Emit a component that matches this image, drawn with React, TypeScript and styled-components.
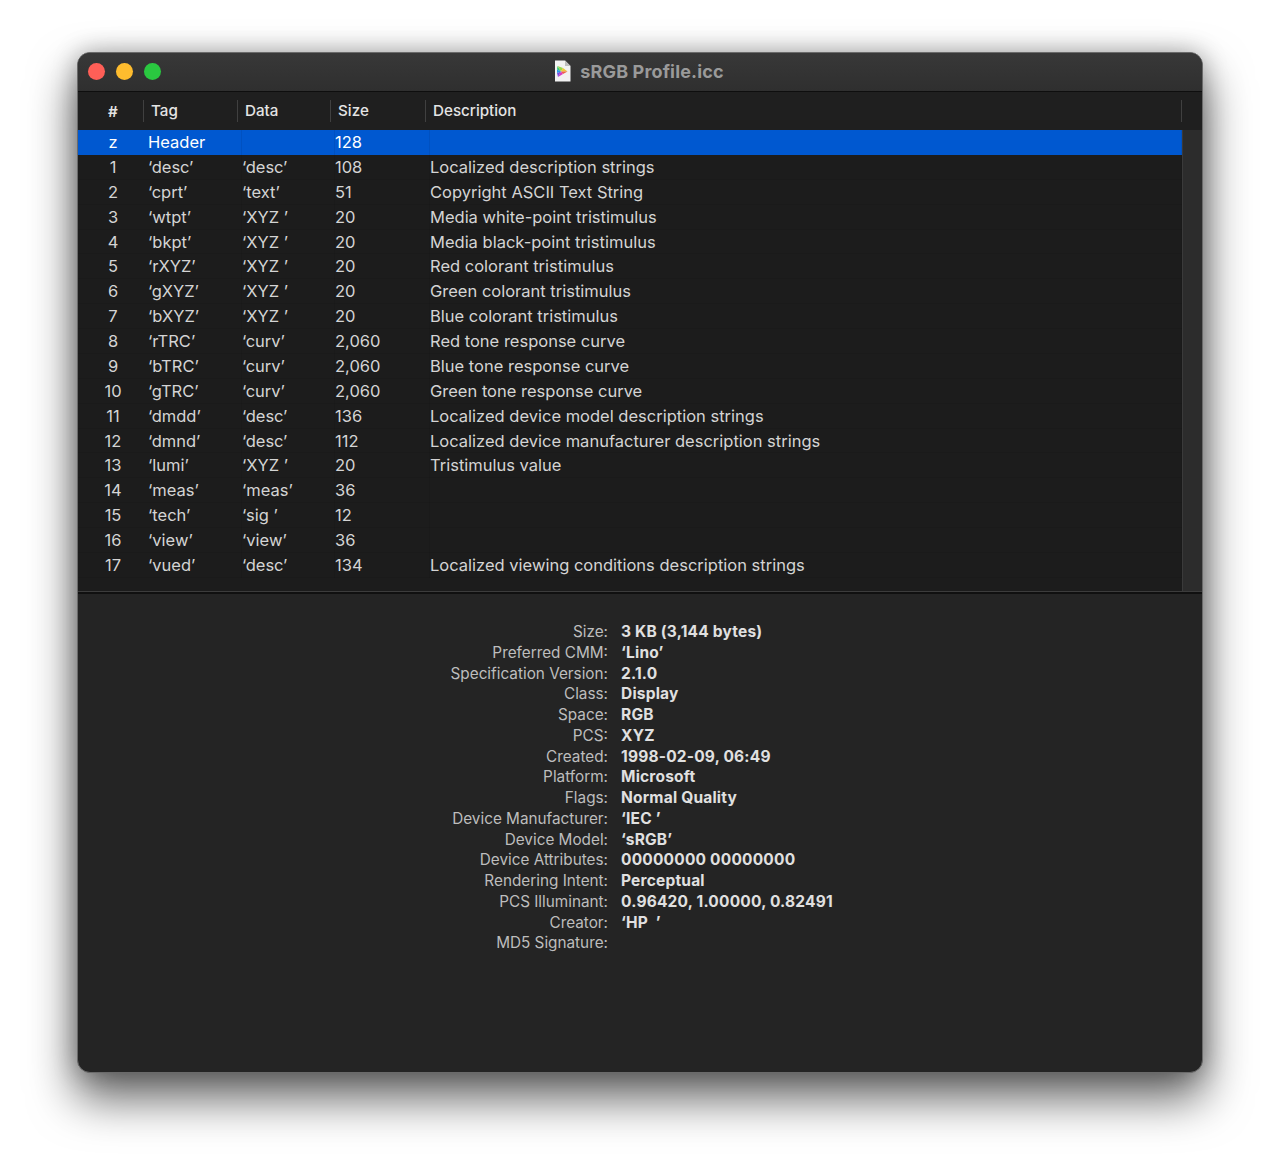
import { createGlobalStyle } from 'styled-components';
import styled from 'styled-components';

const tags = [
	['1', "‘desc’", "‘desc’", '108', 'Localized description strings'],
	['2', "‘cprt’", "‘text’", '51', 'Copyright ASCII Text String'],
	['3', "‘wtpt’", "‘XYZ ’", '20', 'Media white-point tristimulus'],
	['4', "‘bkpt’", "‘XYZ ’", '20', 'Media black-point tristimulus'],
	['5', "‘rXYZ’", "‘XYZ ’", '20', 'Red colorant tristimulus'],
	['6', "‘gXYZ’", "‘XYZ ’", '20', 'Green colorant tristimulus'],
	['7', "‘bXYZ’", "‘XYZ ’", '20', 'Blue colorant tristimulus'],
	['8', "‘rTRC’", "‘curv’", '2,060', 'Red tone response curve'],
	['9', "‘bTRC’", "‘curv’", '2,060', 'Blue tone response curve'],
	['10', "‘gTRC’", "‘curv’", '2,060', 'Green tone response curve'],
	['11', "‘dmdd’", "‘desc’", '136', 'Localized device model description strings'],
	['12', "‘dmnd’", "‘desc’", '112', 'Localized device manufacturer description strings'],
	['13', "‘lumi’", "‘XYZ ’", '20', 'Tristimulus value'],
	['14', "‘meas’", "‘meas’", '36', ''],
	['15', "‘tech’", "‘sig ’", '12', ''],
	['16', "‘view’", "‘view’", '36', ''],
	['17', "‘vued’", "‘desc’", '134', 'Localized viewing conditions description strings'],
];

const info = [
	['Size:', '3 KB (3,144 bytes)'],
	['Preferred CMM:', "‘Lino’"],
	['Specification Version:', '2.1.0'],
	['Class:', 'Display'],
	['Space:', 'RGB'],
	['PCS:', 'XYZ'],
	['Created:', '1998-02-09, 06:49'],
	['Platform:', 'Microsoft'],
	['Flags:', 'Normal Quality'],
	['Device Manufacturer:', "‘IEC ’"],
	['Device Model:', "‘sRGB’"],
	['Device Attributes:', '00000000 00000000'],
	['Rendering Intent:', 'Perceptual'],
	['PCS Illuminant:', '0.96420, 1.00000, 0.82491'],
	['Creator:', "‘HP  ’"],
	['MD5 Signature:', ''],
];

function FileIcon() {
	return (
		<svg width="17" height="22" viewBox="0 0 17 22">
			<path d="M1 0.5H11L16.5 6V21.5H1Z" fill="#f2f2f2" />
			<path d="M11 0.5V6H16.5Z" fill="#bdbdbd" />
			{/* gamut triangle, fan of colours round the white point */}
			<path d="M3.5 6L7 11.5L3 9.5Z" fill="#35c878" />
			<path d="M3.5 6L9 8L7 11.5Z" fill="#9ad648" />
			<path d="M9 8L13.5 11.5L7 11.5Z" fill="#f0c83a" />
			<path d="M13.5 11.5L7 11.5L9 14Z" fill="#f0604a" />
			<path d="M9 14L7 11.5L4 17Z" fill="#d83cc0" />
			<path d="M4 17L7 11.5L3 13Z" fill="#7a4ae0" />
			<path d="M3 13L7 11.5L3 9.5Z" fill="#2a9ae8" />
		</svg>
	);
}

function App() {
	return (
		<>
			<GlobalStyle />
			<Window>
				<TitleBar>
					<Lights>
						<Light color="#ff5f57" />
						<Light color="#febc2e" />
						<Light color="#2ac840" />
					</Lights>
					<Title>
						<FileIcon />
						sRGB Profile.icc
					</Title>
				</TitleBar>
				<TableArea>
					<TableMain>
						<HeaderRow>
							<HashHead>#</HashHead>
							<HeadCell>Tag</HeadCell>
							<HeadCell>Data</HeadCell>
							<HeadCell>Size</HeadCell>
							<LastHeadCell>Description</LastHeadCell>
						</HeaderRow>
						<Row selected>
							<NumCell>z</NumCell>
							<Cell>Header</Cell>
							<Cell />
							<Cell>128</Cell>
							<Cell />
						</Row>
						{tags.map((row) => (
							<Row key={row[0]}>
								<NumCell>{row[0]}</NumCell>
								<Cell>{row[1]}</Cell>
								<Cell>{row[2]}</Cell>
								<Cell>{row[3]}</Cell>
								<Cell>{row[4]}</Cell>
							</Row>
						))}
					</TableMain>
					<ScrollTrack>
						<HeaderStub />
					</ScrollTrack>
				</TableArea>
				<Divider />
				<InfoPanel>
					{info.map(([label, value]) => (
						<InfoRow key={label}>
							<InfoLabel>{label}</InfoLabel>
							<InfoValue>{value}</InfoValue>
						</InfoRow>
					))}
				</InfoPanel>
			</Window>
		</>
	);
}

const GlobalStyle = createGlobalStyle`
	html, body {
		margin: 0;
		background: #fff;
	}
	body {
		font-family: Inter, "Liberation Sans", sans-serif;
		-webkit-font-smoothing: antialiased;
	}
	#root {
		height: 1175px;
		overflow: hidden;
		padding: 52px 77px 0;
		box-sizing: border-box;
	}
`;

const Window = styled.div`
	width: 1126px;
	height: 1021px;
	box-sizing: border-box;
	border: 1px solid #6a6a6a;
	border-radius: 13px;
	overflow: hidden;
	background: #242424;
	box-shadow: 0 24px 46px 2px rgba(0, 0, 0, 0.6), 0 0 24px rgba(0, 0, 0, 0.28);
	display: flex;
	flex-direction: column;
`;

const TitleBar = styled.div`
	height: 38px;
	flex: none;
	position: relative;
	display: flex;
	align-items: center;
	justify-content: center;
	background: linear-gradient(#383838, #2f2f2f);
	border-bottom: 1px solid #0e0e0e;
`;

const Lights = styled.div`
	position: absolute;
	left: 10px;
	top: 10px;
	display: flex;
	gap: 11px;
`;

const Light = styled.span<{ color: string }>`
	width: 17px;
	height: 17px;
	border-radius: 50%;
	background: ${({ color }) => color};
`;

const Title = styled.div`
	display: flex;
	align-items: center;
	gap: 9px;
	font-size: 18px;
	font-weight: 700;
	letter-spacing: 0.15px;
	color: #9a9a9a;
	margin: -2px 2px 0 0;
`;

const TableArea = styled.div`
	display: flex;
	height: 499px;
	flex: none;
	background: #1c1c1c;
`;

const TableMain = styled.div`
	width: 1104px;
	flex: none;
	display: flex;
	flex-direction: column;
`;

const ScrollTrack = styled.div`
	flex: 1;
	background: #2c2c2c;
	border-left: 1px solid #3a3a3a;
`;

const HeaderStub = styled.div`
	height: 38px;
	margin-left: -1px;
	background: #1f1f1f;
`;

const HeaderRow = styled.div`
	height: 38px;
	flex: none;
	display: grid;
	grid-template-columns: 65px 94px 93px 95px 1fr;
	align-items: center;
	background: #1f1f1f;
	font-size: 15.2px;
	font-weight: 500;
	color: #e4e4e4;
`;

const HashHead = styled.div`
	text-align: center;
	padding-left: 5px;
	font-weight: 600;
`;

const HeadCell = styled.div`
	height: 22px;
	line-height: 21px;
	padding-left: 7px;
	border-left: 1px solid #404040;
`;

const LastHeadCell = styled(HeadCell)`
	border-right: 1px solid #404040;
`;

const Row = styled.div<{ selected?: boolean }>`
	height: 24.88px;
	flex: none;
	display: grid;
	grid-template-columns: 70px 94px 93px 95px 1fr;
	font-size: 16.5px;
	line-height: 24.88px;
	color: ${({ selected }) => (selected ? '#ffffff' : '#d4d4d4')};
	background: ${({ selected }) => (selected ? '#0058d0' : 'transparent')};
	box-shadow: inset 0 -1px 0 ${({ selected }) => (selected ? 'transparent' : '#1a1a1a')};
	white-space: pre;
`;

const Cell = styled.div`
	box-shadow: inset -1px 0 0 rgba(0, 0, 0, 0.07);
`;

const NumCell = styled.div`
	text-align: center;
`;

const Divider = styled.div`
	height: 3px;
	flex: none;
	background: #101010;
	border-top: 1px solid #3c3c3c;
	box-sizing: border-box;
`;

const InfoPanel = styled.div`
	padding-top: 28px;
	display: flex;
	flex-direction: column;
`;

const InfoRow = styled.div`
	display: grid;
	grid-template-columns: 530px 1fr;
	column-gap: 13px;
	height: 20.75px;
	line-height: 20.75px;
	white-space: pre;
`;

const InfoLabel = styled.div`
	text-align: right;
	font-size: 15.3px;
	color: #bdbdbd;
`;

const InfoValue = styled.div`
	font-size: 15.5px;
	font-weight: 700;
	letter-spacing: 0.2px;
	color: #e0e0e0;
`;

export default App;
